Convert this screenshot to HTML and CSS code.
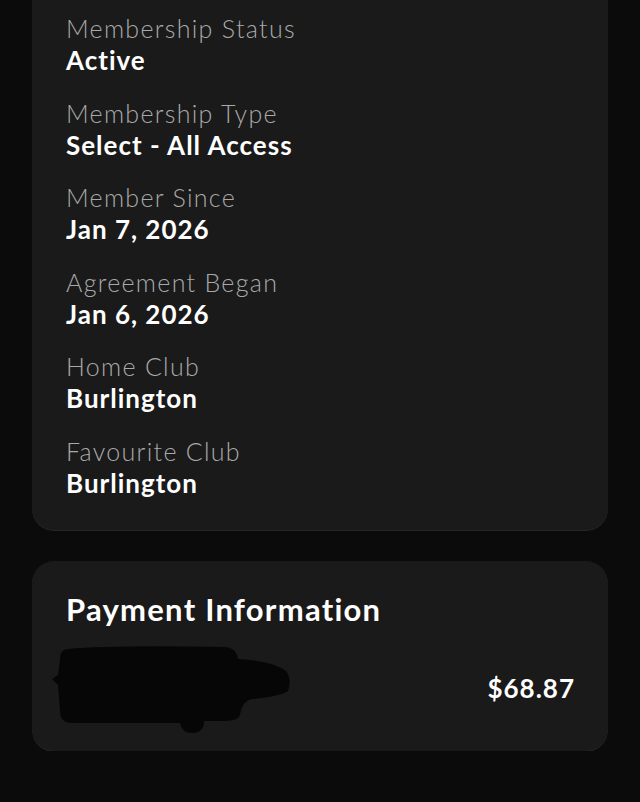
FILE: index.html
```html
<!DOCTYPE html>
<html>
<head>
<meta charset="utf-8">
<link rel="stylesheet" href="styles.css">
</head>
<body>
<div class="page">
  <section class="card details">
    <div class="row"><div class="label">Membership Status</div><div class="value">Active</div></div>
    <div class="row"><div class="label">Membership Type</div><div class="value">Select - All Access</div></div>
    <div class="row"><div class="label">Member Since</div><div class="value">Jan 7, 2026</div></div>
    <div class="row"><div class="label">Agreement Began</div><div class="value">Jan 6, 2026</div></div>
    <div class="row"><div class="label">Home Club</div><div class="value">Burlington</div></div>
    <div class="row"><div class="label">Favourite Club</div><div class="value">Burlington</div></div>
  </section>
  <section class="card payment">
    <h2 class="title">Payment Information</h2>
    <div class="pay-row">
      <div class="redacted">
        <svg width="240" height="90" viewBox="0 0 240 90">
          <path d="M16 4 Q60 0 172 2 Q184 2 186 14 Q220 16 234 26 Q240 34 236 46 Q226 52 200 54 Q190 56 188 70 Q186 76 170 76 L152 76 Q152 88 140 88 Q130 88 128 78 L20 78 Q8 78 8 66 L6 40 L0 34 L6 30 L8 14 Q8 4 16 4 Z" fill="#060606"/>
        </svg>
      </div>
      <div class="amount">$68.87</div>
    </div>
  </section>
</div>
</body>
</html>
```
FILE: styles.css
```css
html, body {
  margin: 0;
  padding: 0;
  background: #0b0b0b;
}
body {
  font-family: Lato, "Open Sans", sans-serif;
  color: #fff;
}
.page {
  padding: 0 32px;
  display: flex;
  flex-direction: column;
  gap: 31px;
}
.card {
  background: #1a1a1a;
  border-radius: 22px;
  box-shadow: 0 1px 0 #262626;
}
.details {
  border-radius: 0 0 22px 22px;
  padding: 12px 34px 31px;
  display: flex;
  flex-direction: column;
  gap: 20.6px;
}
.label {
  font-size: 25px;
  line-height: 32px;
  font-weight: 300;
  color: #a9a9a9;
  letter-spacing: 1.3px;
}
.value {
  font-size: 26px;
  line-height: 32px;
  font-weight: 700;
  color: #fff;
  letter-spacing: 1px;
}
.payment {
  padding: 30px 33px 28px 34px;
}
.title {
  margin: 0;
  font-size: 31px;
  line-height: 36px;
  font-weight: 700;
  letter-spacing: 1.25px;
}
.pay-row {
  display: flex;
  justify-content: space-between;
  align-items: flex-start;
  margin-top: 14px;
  height: 82px;
}
.redacted {
  margin-left: -14px;
  height: 90px;
  margin-top: 4px;
}
.amount {
  font-size: 26px;
  line-height: 32px;
  font-weight: 700;
  letter-spacing: 1px;
  margin-top: 31px;
}
```
